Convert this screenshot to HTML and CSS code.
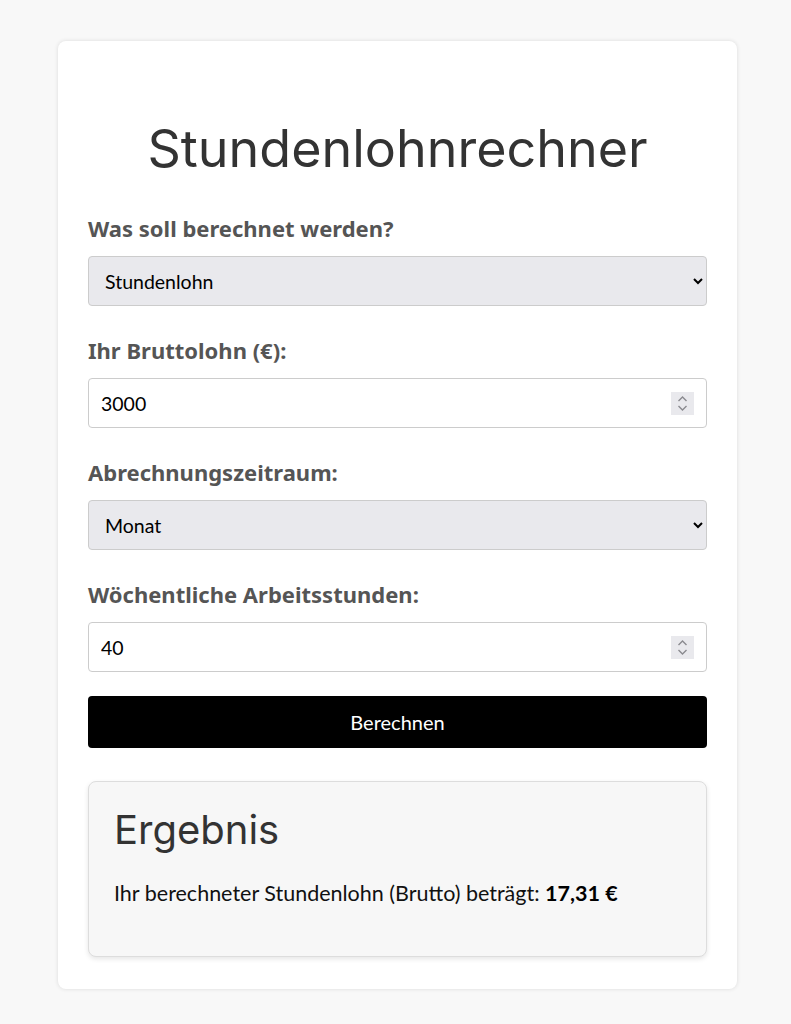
FILE: index.html
```html
<!DOCTYPE html>
<html lang="de">
<head>
    <meta charset="UTF-8">
    <meta name="viewport" content="width=device-width, initial-scale=1.0">
    <title>Stundenlohnrechner</title>
    <link rel="stylesheet" href="styles.css">
</head>
<body>
    <div class="container">
        <h1>Stundenlohnrechner</h1>

        <div class="form-group">
            <label for="calcType">Was soll berechnet werden?</label>
            <select id="calcType">
                <option>Stundenlohn</option>
                <option>Monatslohn</option>
            </select>
        </div>

        <div class="form-group">
            <label for="salary">Ihr Bruttolohn (€):</label>
            <div class="number-wrap">
                <input type="number" id="salary" value="3000">
                <span class="spinner"><svg width="11" height="17" viewBox="0 0 11 17"><path d="M1.5 6 L5.5 2 L9.5 6 M1.5 11 L5.5 15 L9.5 11" fill="none" stroke="#8a8a8f" stroke-width="1.4"/></svg></span>
            </div>
        </div>

        <div class="form-group">
            <label for="period">Abrechnungszeitraum:</label>
            <select id="period">
                <option>Monat</option>
                <option>Jahr</option>
            </select>
        </div>

        <div class="form-group">
            <label for="hours">Wöchentliche Arbeitsstunden:</label>
            <div class="number-wrap">
                <input type="number" id="hours" value="40">
                <span class="spinner"><svg width="11" height="17" viewBox="0 0 11 17"><path d="M1.5 6 L5.5 2 L9.5 6 M1.5 11 L5.5 15 L9.5 11" fill="none" stroke="#8a8a8f" stroke-width="1.4"/></svg></span>
            </div>
        </div>

        <button class="calc-btn">Berechnen</button>

        <div class="result">
            <h2>Ergebnis</h2>
            <p>Ihr berechneter Stundenlohn (Brutto) beträgt: <strong>17,31 €</strong></p>
        </div>
    </div>
</body>
</html>
```

FILE: styles.css
```css
body {
    margin: 0;
    padding: 41px 0 30px 4px;
    background: #f8f8f8;
    font-family: "Lato", Arial, sans-serif;
    color: #333;
}
.container {
    width: 619px;
    margin: 0 auto;
    background: #fff;
    padding: 76px 30px 32px;
    border-radius: 8px;
    box-shadow: 0 0 4px rgba(0, 0, 0, 0.12);
}
h1 {
    font-family: "Inter", Arial, sans-serif;
    font-weight: 400;
    font-size: 52px;
    line-height: 63px;
    text-align: center;
    margin: 0;
    color: #333;
}
.form-group { margin-top: 29px; }
h1 + .form-group { margin-top: 33px; }
label {
    display: block;
    font-family: "Noto Sans", Arial, sans-serif;
    font-weight: 700;
    font-size: 22px;
    line-height: 30px;
    color: #555;
    margin-bottom: 13px;
}
select, input {
    display: block;
    width: 100%;
    box-sizing: border-box;
    height: 50px;
    padding: 0 12px;
    font-family: "Lato", Arial, sans-serif;
    font-size: 19.5px;
    color: #000;
    border: 1px solid #ccc;
    border-radius: 4px;
}
select { background: #e9e9ed; }
input { background: #fff; }
.number-wrap { position: relative; }
.spinner {
    position: absolute;
    right: 13px;
    top: 14px;
    width: 23px;
    height: 23px;
    background: #e9e9ed;
    display: flex;
    align-items: center;
    justify-content: center;
}
.calc-btn {
    display: block;
    width: 100%;
    height: 52px;
    margin-top: 24px;
    background: #000;
    color: #fff;
    border: none;
    border-radius: 4px;
    font-family: "Lato", Arial, sans-serif;
    font-size: 20px;
    cursor: pointer;
}
.result {
    margin-top: 33px;
    background: #f7f7f7;
    border: 1px solid #ddd;
    border-radius: 8px;
    padding: 24px 25px 50px;
    box-shadow: 0 2px 5px rgba(0, 0, 0, 0.1);
}
.result h2 {
    font-family: "Inter", Arial, sans-serif;
    font-weight: 400;
    font-size: 40px;
    line-height: 48px;
    margin: 0 0 26px;
}
.result p {
    font-size: 21.5px;
    line-height: 26px;
    margin: 0;
    color: #111;
}
.result strong { color: #000; }
```
